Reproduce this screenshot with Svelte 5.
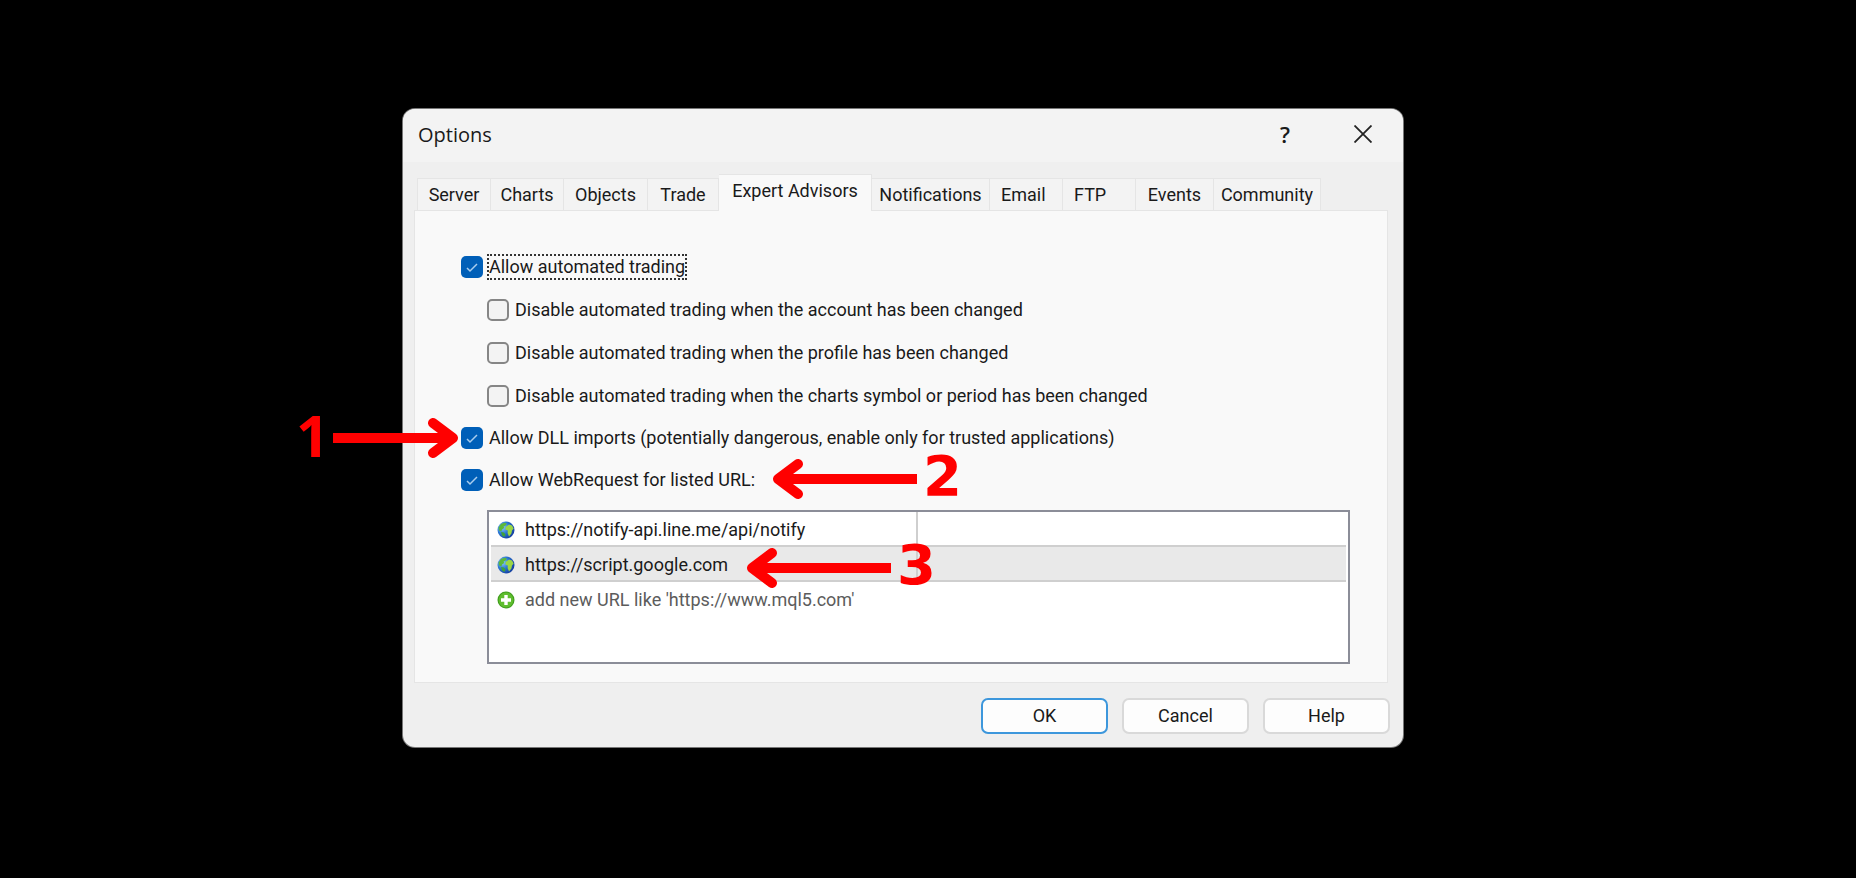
<script>
  const tabs = [
    { name: 'Server', width: 74 },
    { name: 'Charts', width: 73 },
    { name: 'Objects', width: 84 },
    { name: 'Trade', width: 71 },
    { name: 'Expert Advisors', width: 153 },
    { name: 'Notifications', width: 118 },
    { name: 'Email', width: 73, start: true },
    { name: 'FTP', width: 73, start: true },
    { name: 'Events', width: 78 },
    { name: 'Community', width: 107 },
  ];

  let activeTab = $state('Expert Advisors');

  let options = $state([
    { id: 'auto', label: 'Allow automated trading', checked: true, focused: true },
    { id: 'account', label: 'Disable automated trading when the account has been changed', checked: false, sub: true },
    { id: 'profile', label: 'Disable automated trading when the profile has been changed', checked: false, sub: true },
    { id: 'symbol', label: 'Disable automated trading when the charts symbol or period has been changed', checked: false, sub: true },
    { id: 'dll', label: 'Allow DLL imports (potentially dangerous, enable only for trusted applications)', checked: true },
    { id: 'web', label: 'Allow WebRequest for listed URL:', checked: true },
  ]);

  const urls = ['https://notify-api.line.me/api/notify', 'https://script.google.com'];
  let selected = $state(1);

  // callouts pinned over the dialog, measured from its top left corner
  const callouts = [
    { step: 1, left: -107, top: 308, length: 126, right: true },
    { step: 2, left: 369, top: 349, length: 145 },
    { step: 3, left: 343, top: 438, length: 145 },
  ];
</script>

{#snippet globe()}
  <svg class="icon" viewBox="0 0 18 18" aria-hidden="true">
    <defs>
      <radialGradient id="sea" cx="0.3" cy="0.35" r="0.75">
        <stop offset="0" stop-color="#8fd0f8" />
        <stop offset="0.5" stop-color="#2b77d3" />
        <stop offset="1" stop-color="#123a9c" />
      </radialGradient>
    </defs>
    <circle cx="9" cy="9" r="8.5" fill="url(#sea)" />
    <path d="M1.6 6.5 4 3 7.6 1.8 9.8 2.6 8.6 4.6 6.6 5.4 7.2 7 5 8.4 4.4 10.4 2 9.6z" fill="#5cb83a" />
    <path d="M8.6 6 12 3.4 15 4.4 16.6 7.6 15 9.6 14.4 12.6 12 15.4 10.6 12 10.8 9.6 8.4 8.4z" fill="#9bd645" />
    <path d="M4 11 6.8 11.6 8.6 13.6 7.4 16 5 14.4z" fill="#3fa03a" />
  </svg>
{/snippet}

<main>
  <div class="dialog" role="dialog" aria-labelledby="title">
    <header>
      <h1 id="title">Options</h1>
      <button class="caption" aria-label="Help">?</button>
      <button class="caption" aria-label="Close">
        <svg width="18" height="18" viewBox="0 0 18 18" aria-hidden="true">
          <path d="M0.5 0.5 17.5 17.5M17.5 0.5 0.5 17.5" stroke="#222" stroke-width="1.8" />
        </svg>
      </button>
    </header>

    <div class="body">
      <div class="tabs" role="tablist">
        {#each tabs as tab}
          <button
            role="tab"
            class="tab"
            class:start={tab.start}
            class:active={tab.name === activeTab}
            aria-selected={tab.name === activeTab}
            style:width="{tab.width}px"
            onclick={() => (activeTab = tab.name)}
          >{tab.name}</button>
        {/each}
      </div>

      <section class="panel">
        {#each options as option}
          <div class="option" class:sub={option.sub}>
            <input type="checkbox" id={option.id} bind:checked={option.checked} />
            <label for={option.id} class:focused={option.focused}>{option.label}</label>
          </div>
        {/each}

        <div class="list">
          <table>
            <tbody>
              {#each urls as url, i}
                <tr class:selected={i === selected} onclick={() => (selected = i)}>
                  <td><div class="cell">{@render globe()}{url}</div></td>
                  <td></td>
                </tr>
              {/each}
              <tr class="new">
                <td>
                  <div class="cell">
                    <svg class="icon" viewBox="0 0 18 18" aria-hidden="true">
                      <circle cx="9" cy="9" r="8.5" fill="#3f9d1c" />
                      <circle cx="9" cy="9" r="7.4" fill="#5fbd2e" />
                      <path d="M9 4V14M4 9H14" stroke="#fff" stroke-width="3.4" />
                    </svg>
                    add new URL like 'https://www.mql5.com'
                  </div>
                </td>
                <td></td>
              </tr>
            </tbody>
          </table>
        </div>
      </section>
    </div>

    <footer>
      <button class="push default">OK</button>
      <button class="push">Cancel</button>
      <button class="push">Help</button>
    </footer>

    {#each callouts as c}
      <div class="callout" class:right={c.right} style:left="{c.left}px" style:top="{c.top}px">
        <svg width={c.length} height="42" viewBox="0 0 {c.length} 42" aria-hidden="true">
          {#if c.right}
            <path d="M0 21H{c.length - 6}" />
            <path d="M{c.length - 26} 6 {c.length - 6} 21 {c.length - 26} 36" class="head" />
          {:else}
            <path d="M{c.length} 21H6" />
            <path d="M26 6 6 21 26 36" class="head" />
          {/if}
        </svg>
        <span>{c.step}</span>
      </div>
    {/each}
  </div>
</main>

<style>
  :global(body) {
    margin: 0;
    background: #000;
  }

  main {
    display: flex;
    justify-content: center;
    box-sizing: border-box;
    min-height: 100vh;
    padding: 109px 50px 109px 0;
    background: #000;
    font-family: Roboto, 'Liberation Sans', sans-serif;
    font-size: 18px;
    line-height: 24px;
    color: #1a1a1a;
  }

  button {
    font: inherit;
    color: inherit;
  }

  .dialog {
    position: relative;
    align-self: flex-start;
    width: 100%;
    max-width: 1000px;
    border-radius: 12px;
    background: #efefef;
    box-shadow: 0 0 0 1px #777;
  }

  header {
    display: flex;
    align-items: center;
    box-sizing: border-box;
    height: 53px;
    padding: 0 1px 3px 15px;
    border-radius: 12px 12px 0 0;
    background: #f3f3f3;
  }

  h1 {
    flex: 1;
    margin: 0;
    padding-top: 2px;
    font-family: 'Open Sans', 'Noto Sans', sans-serif;
    font-size: 20px;
    font-weight: 400;
  }

  .caption {
    display: grid;
    place-items: center;
    width: 78px;
    height: 50px;
    padding: 0;
    border: 0;
    background: none;
    font-family: 'Open Sans', 'Noto Sans', sans-serif;
    font-size: 22px;
    font-weight: 600;
  }

  .body {
    padding: 12px 15px 0 11px;
  }

  .tabs {
    display: flex;
    align-items: flex-end;
    height: 36px;
    padding-left: 3px;
  }

  .tab {
    box-sizing: border-box;
    height: 32px;
    padding: 0;
    border: 1px solid #e5e5e5;
    border-width: 1px 1px 0 0;
    background: #f3f3f3;
    white-space: nowrap;
  }

  .tab:first-child {
    border-left-width: 1px;
  }

  .tab.start {
    padding-left: 11px;
    text-align: left;
  }

  .tab.active {
    height: 37px;
    margin-bottom: -1px;
    padding-bottom: 4px;
    background: #f9f9f9;
    z-index: 1;
  }

  .panel {
    padding: 34px 37px 18px 46px;
    border: 1px solid #e5e5e5;
    background: #f9f9f9;
  }

  .option {
    display: flex;
    align-items: center;
    gap: 4px;
    height: 43px;
  }

  .option.sub {
    padding-left: 26px;
  }

  .option.sub ~ .option:not(.sub) {
    height: 42px;
  }

  input {
    appearance: none;
    flex: none;
    box-sizing: border-box;
    width: 22px;
    height: 22px;
    margin: 0;
    border: 2px solid #868686;
    border-radius: 5px;
    background: #f3f3f3;
  }

  input:checked {
    border: 0;
    background: #005fb8
      url("data:image/svg+xml,%3Csvg xmlns='http://www.w3.org/2000/svg' viewBox='0 0 22 22'%3E%3Cpath d='M6 12l3 3 7-7' fill='none' stroke='%23a9cdee' stroke-width='1.5'/%3E%3C/svg%3E");
  }

  label {
    border: 2px solid transparent;
    line-height: 22px;
    white-space: nowrap;
  }

  label.focused {
    border: 2px dotted #333;
  }

  .list {
    box-sizing: border-box;
    height: 154px;
    margin: 9px 0 0 26px;
    padding: 0 2px;
    border: 2px solid #8b8d98;
    background: #fff;
  }

  table {
    width: 100%;
    border-collapse: collapse;
    table-layout: fixed;
  }

  td {
    height: 33px;
    padding: 0;
    border-bottom: 2px solid #cfcfcf;
  }

  td:first-child {
    width: 425px;
    border-right: 2px solid #cfcfcf;
  }

  .new td,
  .new td:first-child {
    border-color: transparent;
    color: #5c5c5c;
  }

  .selected {
    background: #e9e9e9;
  }

  .cell {
    display: flex;
    align-items: center;
    gap: 10px;
    padding: 2px 0 0 6px;
    white-space: nowrap;
  }

  .icon {
    flex: none;
    width: 18px;
    height: 18px;
  }

  footer {
    display: flex;
    justify-content: flex-end;
    gap: 14px;
    padding: 15px 13px 13px;
  }

  .push {
    box-sizing: border-box;
    width: 127px;
    height: 36px;
    padding: 0;
    border: 2px solid #d9d9d9;
    border-radius: 7px;
    background: #fdfdfd;
  }

  .push.default {
    border-color: #3d97dc;
  }

  .callout {
    position: absolute;
    display: flex;
    align-items: center;
    gap: 6px;
    height: 42px;
    color: #f00;
    font: 700 56px/42px 'DejaVu Sans', sans-serif;
    pointer-events: none;
  }

  .callout.right {
    flex-direction: row-reverse;
    gap: 4px;
    font: 700 58px/42px 'Open Sans', 'Noto Sans', sans-serif;
  }

  .callout span {
    padding-bottom: 6px;
  }

  .callout path {
    fill: none;
    stroke: #f00;
    stroke-width: 10;
  }

  .callout .head {
    stroke-linecap: round;
    stroke-linejoin: round;
  }
</style>
